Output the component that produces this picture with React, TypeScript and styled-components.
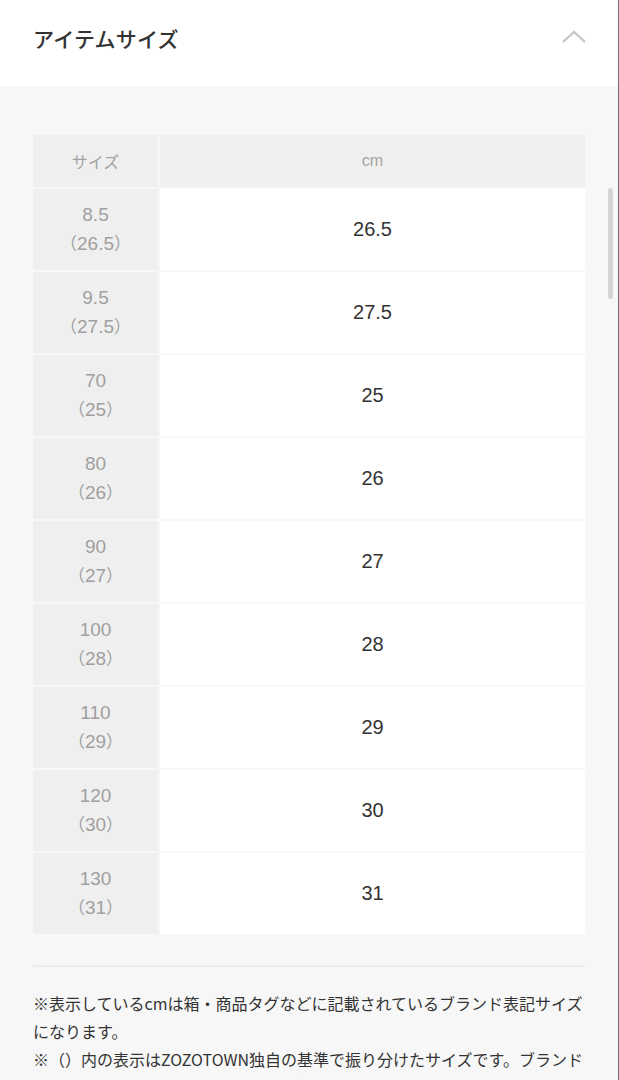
import React from 'react';
import styled, { createGlobalStyle } from 'styled-components';

const rows = [
  { size: '8.5', base: '26.5', cm: '26.5' },
  { size: '9.5', base: '27.5', cm: '27.5' },
  { size: '70', base: '25', cm: '25' },
  { size: '80', base: '26', cm: '26' },
  { size: '90', base: '27', cm: '27' },
  { size: '100', base: '28', cm: '28' },
  { size: '110', base: '29', cm: '29' },
  { size: '120', base: '30', cm: '30' },
  { size: '130', base: '31', cm: '31' },
];

const GlobalStyle = createGlobalStyle`
  html, body {
    margin: 0;
    padding: 0;
    background: #f7f7f7;
  }
  body {
    font-family: "Liberation Sans", "Noto Sans CJK JP", sans-serif;
    -webkit-font-smoothing: antialiased;
  }
`;

export default function App() {
  return (
    <>
      <GlobalStyle />
      <Page>
        <Header>
          <Title>アイテムサイズ</Title>
          <Chevron width="26" height="16" viewBox="0 0 26 16">
            <polyline points="2,13 13,3 24,13" fill="none" stroke="#c4c4c4" strokeWidth="2.2" />
          </Chevron>
        </Header>
        <Body>
          <SizeTable>
            <HeadCell>サイズ</HeadCell>
            <HeadCell>cm</HeadCell>
            {rows.map((r) => (
              <React.Fragment key={r.size}>
                <SizeCell>
                  <span>{r.size}</span>
                  <span>
                    <Paren>（</Paren>
                    {r.base}
                    <Paren>）</Paren>
                  </span>
                </SizeCell>
                <ValueCell>{r.cm}</ValueCell>
              </React.Fragment>
            ))}
          </SizeTable>
          <Divider />
          <Notes>
            <p>※表示しているcmは箱・商品タグなどに記載されているブランド表記サイズになります。</p>
            <p>※（）内の表示はZOZOTOWN独自の基準で振り分けたサイズです。ブランドによってサイズ感が異なる場合がございます。</p>
          </Notes>
        </Body>
        <ScrollThumb />
      </Page>
    </>
  );
}

const Page = styled.div`
  position: relative;
  min-height: 1080px;
  border-right: 1px solid #6e6e6e;
  box-sizing: border-box;
  overflow: hidden;
`;

const Header = styled.div`
  height: 86px;
  background: #fff;
  display: flex;
  align-items: center;
  justify-content: space-between;
  padding: 0 31px 10px 33px;
  box-sizing: border-box;
`;

const Title = styled.h2`
  margin: 0;
  font-family: "Noto Sans CJK JP", sans-serif;
  font-size: 21px;
  font-weight: 500;
  color: #333;
  letter-spacing: 0.2px;
`;

const Chevron = styled.svg`
  display: block;
  margin-bottom: 2px;
`;

const Body = styled.div`
  background: #f7f7f7;
  padding: 49px 33px 40px 33px;
`;

const SizeTable = styled.div`
  display: grid;
  grid-template-columns: 125px 1fr;
  grid-template-rows: 52px;
  grid-auto-rows: 81px;
  gap: 2px;
`;

const HeadCell = styled.div`
  background: #efefef;
  display: flex;
  align-items: center;
  justify-content: center;
  font-size: 16px;
  color: #a3a3a3;
  font-family: "Liberation Sans", "Noto Sans CJK JP", sans-serif;
`;

const SizeCell = styled.div`
  background: #efefef;
  display: flex;
  flex-direction: column;
  align-items: center;
  justify-content: center;
  font-size: 19px;
  line-height: 28px;
  color: #a0a0a0;
  font-family: "Liberation Sans", "Noto Sans CJK JP", sans-serif;
`;

const Paren = styled.span`
  font-family: "Noto Sans CJK JP", sans-serif;
  font-size: 17px;
  display: inline-block;
  width: 9px;
  overflow: visible;
  &:first-child {
    text-indent: -8px;
  }
`;

const ValueCell = styled.div`
  background: #fff;
  display: flex;
  align-items: center;
  justify-content: center;
  font-size: 20px;
  color: #333;
`;

const Divider = styled.hr`
  margin: 31px 0 22px;
  border: none;
  height: 2px;
  background: #ebebeb;
`;

const Notes = styled.div`
  font-family: "Noto Sans CJK JP", sans-serif;
  font-size: 16px;
  line-height: 28px;
  color: #333;

  p {
    margin: 0;
  }
`;

const ScrollThumb = styled.div`
  position: absolute;
  top: 188px;
  right: 5px;
  width: 5px;
  height: 111px;
  border-radius: 3px;
  background: #d4d4d4;
`;
